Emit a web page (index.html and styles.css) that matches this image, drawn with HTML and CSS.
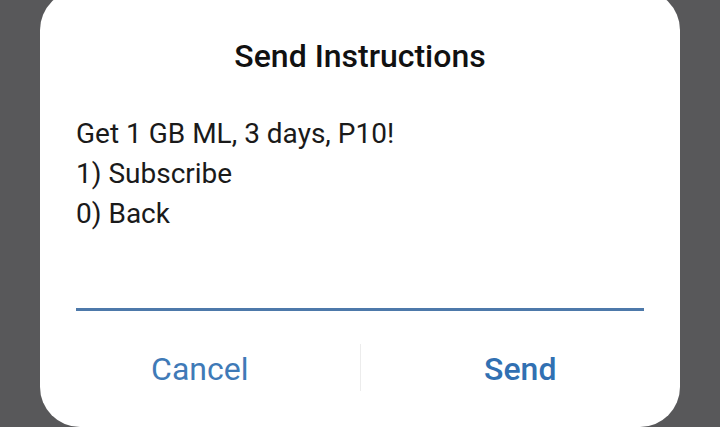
FILE: index.html
```html
<!DOCTYPE html>
<html>
<head>
<meta charset="utf-8">
<link rel="stylesheet" href="styles.css">
</head>
<body>
<div class="dialog">
  <h1 class="title">Send Instructions</h1>
  <div class="message">
    <div>Get 1 GB ML, 3 days, P10!</div>
    <div>1) Subscribe</div>
    <div>0) Back</div>
  </div>
  <div class="input"></div>
  <div class="actions">
    <div class="btn cancel">Cancel</div>
    <div class="divider"></div>
    <div class="btn send">Send</div>
  </div>
</div>
</body>
</html>
```
FILE: styles.css
```css
html, body {
  margin: 0;
  padding: 0;
}
body {
  width: 720px;
  height: 427px;
  overflow: hidden;
  background: #58585a;
  font-family: Roboto, "Noto Sans", sans-serif;
}
.dialog {
  margin: -10px 0 0 40px;
  width: 640px;
  height: 437px;
  background: #fff;
  border-radius: 40px;
  box-sizing: border-box;
  padding-top: 48px;
  display: flex;
  flex-direction: column;
}
.title {
  margin: 0;
  font-size: 32px;
  font-weight: 500;
  line-height: 36px;
  text-align: center;
  color: #111;
}
.message {
  margin-top: 40px;
  padding: 0 36px;
  font-size: 28px;
  line-height: 40px;
  color: #1a1a1a;
}
.input {
  margin: 74px 36px 0;
  height: 0;
  border-bottom: 3px solid #4d79aa;
}
.actions {
  margin-top: 33px;
  display: flex;
  align-items: center;
  height: 47px;
}
.btn {
  flex: 1;
  text-align: center;
  font-size: 32px;
  line-height: 40px;
  padding-top: 3px;
}
.cancel {
  color: #3f7ab7;
}
.send {
  color: #3170b2;
  font-weight: 500;
}
.divider {
  width: 1px;
  height: 47px;
  background: #ececec;
}
```
